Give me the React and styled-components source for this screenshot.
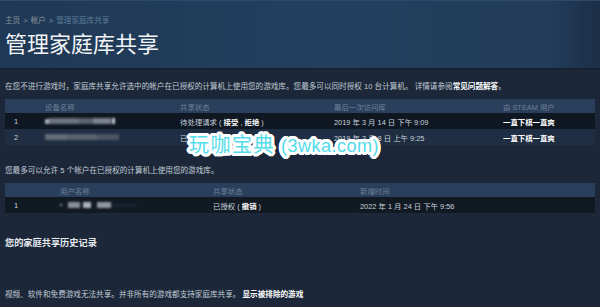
import React from 'react';
import styled, { createGlobalStyle } from 'styled-components';

const GlobalStyle = createGlobalStyle`
  html, body {
    margin: 0;
    padding: 0;
    height: 307px;
    overflow: hidden;
    background: #1b2838;
  }
  body {
    font-family: "Liberation Sans", "Noto Sans CJK SC", sans-serif;
    color: #c6d4df;
  }
`;

const Page = styled.div`
  position: relative;
  width: 600px;
  height: 307px;
  background: #1c2839;
`;

const Header = styled.div`
  height: 70px;
  box-sizing: border-box;
  padding: 15px 5px 0;
  background: linear-gradient(to right, #1f3855 0%, #23405e 55%, #223c59 92%, #1b2f47 100%);
  border-top: 1px solid #2c4a6a;
  border-bottom: 2px solid #18222f;
`;

const Crumbs = styled.div`
  font-size: 7.6px;
  line-height: 9px;
  color: #8b949c;
`;

const CrumbSep = styled.span`
  margin: 0 3px;
`;

const CrumbCurrent = styled.span`
  color: #5e7b99;
`;

const Title = styled.h1`
  margin: 4px 0 0;
  font-family: "Noto Sans CJK SC", sans-serif;
  font-size: 22px;
  line-height: 26px;
  font-weight: 400;
  color: #f2f4f6;
`;

const Content = styled.div`
  padding: 0 5px;
`;

const Note = styled.p`
  margin: ${(p) => p.top || 0}px 0 0;
  font-size: 7.6px;
  line-height: 10px;
  color: #c2ccd6;
  white-space: nowrap;
`;

const Strong = styled.b`
  color: #ffffff;
`;

const Table = styled.div`
  margin-top: ${(p) => p.top}px;
  width: 590px;
`;

const Row = styled.div`
  display: grid;
  grid-template-columns: ${(p) => p.cols};
  align-items: center;
  padding-left: 9px;
  height: ${(p) => (p.head ? 14 : 16)}px;
  background: ${(p) => p.bg};
  font-size: 7.4px;
  color: ${(p) => (p.head ? '#6d8199' : '#c8d2dc')};
  white-space: nowrap;
`;

const Bold = styled.span`
  color: #ffffff;
  font-weight: 700;
`;

const Blur = styled.div`
  display: flex;
  align-items: center;
  height: 6px;
  filter: blur(0.8px);
`;

const Seg = styled.span`
  display: block;
  width: ${(p) => p.w}px;
  height: ${(p) => p.h || 6}px;
  margin-right: ${(p) => p.gap || 0}px;
  background: ${(p) => p.c};
`;

const History = styled.h2`
  margin: 24px 0 0;
  font-size: 9.2px;
  line-height: 12px;
  font-weight: 700;
  color: #e6eaee;
`;

const ring = [];
[3.2, 2.2, 1.2].forEach((r) => {
  for (let i = 0; i < 16; i++) {
    const a = (i / 16) * Math.PI * 2;
    ring.push(`${(Math.cos(a) * r).toFixed(2)}px ${(Math.sin(a) * r).toFixed(2)}px 0 #fff`);
  }
});

const Watermark = styled.div`
  position: absolute;
  left: 189px;
  top: 130px;
  font-family: "Noto Sans CJK SC", sans-serif;
  font-size: 20px;
  line-height: 28px;
  letter-spacing: 1.5px;
  color: #52dbe9;
  white-space: nowrap;
  text-shadow: ${ring.join(', ')};
`;

const Latin = styled.span`
  font-family: "Liberation Sans", sans-serif;
  font-size: 18px;
  letter-spacing: 0.5px;
`;

const cols1 = '31px 135px 154px 169px 1fr';
const cols2 = '46px 153px 147px 1fr';

export default function App() {
  return (
    <Page>
      <GlobalStyle />
      <Header>
        <Crumbs>
          主页<CrumbSep>&gt;</CrumbSep>帐户<CrumbSep>&gt;</CrumbSep>
          <CrumbCurrent>管理家庭库共享</CrumbCurrent>
        </Crumbs>
        <Title>管理家庭库共享</Title>
      </Header>

      <Content>
        <Note top={12}>
          在您不进行游戏时，家庭库共享允许选中的帐户在已授权的计算机上使用您的游戏库。您最多可以同时授权 10 台计算机。 详情请参阅<Strong>常见问题解答</Strong>。
        </Note>

        <Table top={7}>
          <Row head cols={cols1} bg="#2a3f5b">
            <span />
            <span>设备名称</span>
            <span>共享状态</span>
            <span>最后一次访问库</span>
            <span>由 STEAM 用户</span>
          </Row>
          <Row cols={cols1} bg="#0f1722">
            <span>1</span>
            <Blur>
              <Seg w={4} c="#aab0b8" h={5} />
              <Seg w={30} c="#6c7480" />
              <Seg w={14} c="#5a626d" />
              <Seg w={18} c="#7b838e" gap={1} />
              <Seg w={3} c="#c8ced4" h={6} />
            </Blur>
            <span>
              待处理请求 ( <Bold>接受</Bold> , <Bold>拒绝</Bold> )
            </span>
            <span>2019 年 3 月 14 日 下午 9:09</span>
            <Bold>一直下棋一直爽</Bold>
          </Row>
          <Row cols={cols1} bg="#1f2e42">
            <span>2</span>
            <Blur>
              <Seg w={22} c="#636c78" />
              <Seg w={30} c="#59626e" />
              <Seg w={22} c="#4c5562" />
            </Blur>
            <span>已授权 ( <Bold>撤销</Bold> )</span>
            <span>2019 年 3 月 8 日 上午 9:25</span>
            <Bold>一直下棋一直爽</Bold>
          </Row>
        </Table>

        <Note top={21}>您最多可以允许 5 个帐户在已授权的计算机上使用您的游戏库。</Note>

        <Table top={7}>
          <Row head cols={cols2} bg="#2a3f5b">
            <span />
            <span>用户名称</span>
            <span>共享状态</span>
            <span>新增时间</span>
          </Row>
          <Row cols={cols2} bg="#111923">
            <span>1</span>
            <Blur>
              <Seg w={2} c="#8a9099" h={2} gap={6} />
              <Seg w={12} c="#8d8f97" gap={3} />
              <Seg w={8} c="#b0b2b8" gap={6} />
              <Seg w={14} c="#92959c" />
              <Seg w={26} c="#2b3644" h={1} />
            </Blur>
            <span>已授权 ( <Bold>撤销</Bold> )</span>
            <span>2022 年 1 月 24 日 下午 9:56</span>
          </Row>
        </Table>

        <History>您的家庭共享历史记录</History>

        <Note top={41}>
          视频、软件和免费游戏无法共享。并非所有的游戏都支持家庭库共享。 <Strong>显示被排除的游戏</Strong>
        </Note>
      </Content>

      <Watermark>
        玩咖宝典 <Latin>(3wka.com)</Latin>
      </Watermark>
    </Page>
  );
}
